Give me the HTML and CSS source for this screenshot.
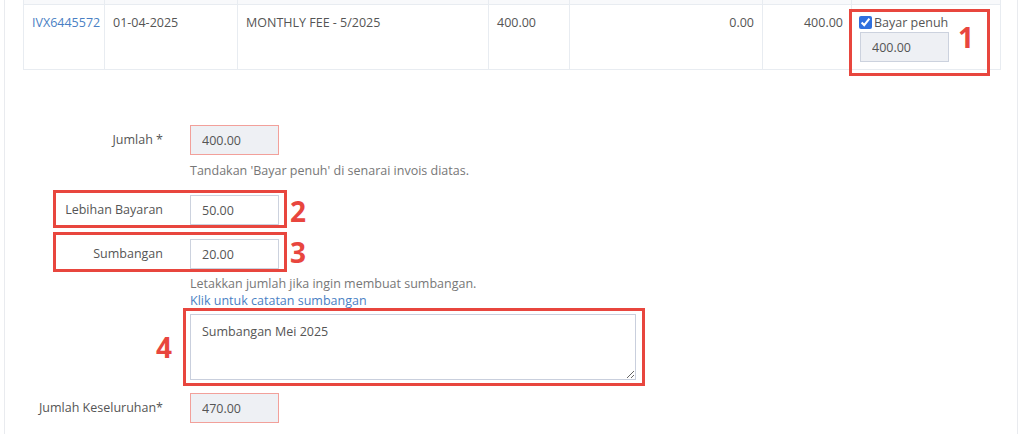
FILE: index.html
```html
<!DOCTYPE html>
<html lang="ms">
<head>
<meta charset="UTF-8">
<title>Bayaran Invois</title>
<link rel="stylesheet" href="styles.css">
</head>
<body>
<div class="panel">
  <table class="invoices">
    <colgroup>
      <col style="width:81px">
      <col style="width:133px">
      <col style="width:251px">
      <col style="width:81px">
      <col style="width:193px">
      <col style="width:89px">
      <col style="width:149px">
    </colgroup>
    <thead>
      <tr class="stub"><th></th><th></th><th></th><th></th><th></th><th></th><th></th></tr>
    </thead>
    <tbody>
      <tr>
        <td><a href="#" class="link">IVX6445572</a></td>
        <td>01-04-2025</td>
        <td>MONTHLY FEE - 5/2025</td>
        <td>400.00</td>
        <td class="num">0.00</td>
        <td class="num">400.00</td>
        <td class="pay-cell">
          <label class="full-pay"><input type="checkbox" checked> Bayar penuh</label>
          <input type="text" class="field field-small readonly" value="400.00" readonly>
        </td>
      </tr>
    </tbody>
  </table>

  <form class="pay-form">
    <div class="row">
      <label class="row-label">Jumlah *</label>
      <div class="row-field">
        <input type="text" class="field readonly error" value="400.00" readonly>
        <p class="help">Tandakan 'Bayar penuh' di senarai invois diatas.</p>
      </div>
    </div>
    <div class="row row-over">
      <label class="row-label">Lebihan Bayaran</label>
      <div class="row-field">
        <input type="text" class="field" value="50.00">
      </div>
    </div>
    <div class="row row-don">
      <label class="row-label">Sumbangan</label>
      <div class="row-field">
        <input type="text" class="field" value="20.00">
        <p class="help">Letakkan jumlah jika ingin membuat sumbangan.</p>
        <a href="#" class="link note-link">Klik untuk catatan sumbangan</a>
        <textarea class="note">Sumbangan Mei 2025</textarea>
      </div>
    </div>
    <div class="row row-total">
      <label class="row-label">Jumlah Keseluruhan*</label>
      <div class="row-field">
        <input type="text" class="field readonly error" value="470.00" readonly>
      </div>
    </div>
  </form>

  <!-- penanda arahan -->
  <div class="mark mark-1"></div>
  <span class="mark-num num-1">1</span>
  <div class="mark mark-2"></div>
  <span class="mark-num num-2">2</span>
  <div class="mark mark-3"></div>
  <span class="mark-num num-3">3</span>
  <div class="mark mark-4"></div>
  <span class="mark-num num-4">4</span>
</div>
</body>
</html>
```

FILE: styles.css
```css
body {
  margin: 0;
  background: #fff;
  font-family: 'Open Sans', 'Liberation Sans', sans-serif;
  font-size: 12.5px;
  color: #555;
}
.panel {
  position: relative;
  margin-left: 4px;
  width: 1014px;
  height: 434px;
  border-left: 1px solid #e9ebef;
  border-right: 1px solid #e9ebef;
  padding-left: 18px;
  box-sizing: border-box;
}
.invoices {
  table-layout: fixed;
  border-collapse: collapse;
  width: 977px;
}
.invoices th,
.invoices td {
  border: 1px solid #e8ecf1;
  padding: 9px 8px 8px;
  line-height: 17px;
  text-align: left;
  vertical-align: top;
  font-weight: normal;
}
.invoices .stub th {
  height: 4px;
  padding: 0;
  background: #f8f9fb;
  border-top: none;
}
.invoices tbody tr {
  height: 65px;
}
.invoices .num {
  text-align: right;
}
.invoices .pay-cell {
  padding-bottom: 6px;
}
.link {
  color: #4a7fc4;
  text-decoration: none;
}
.full-pay {
  display: flex;
  align-items: center;
  gap: 2px;
  font-size: 12.5px;
  color: #555;
}
.full-pay input {
  margin: 0 0 0 -1px;
  width: 13px;
  height: 13px;
  accent-color: #2f6fde;
}
.field {
  display: block;
  width: 89px;
  height: 30px;
  box-sizing: border-box;
  padding: 0 11px;
  border: 1px solid #ccd2de;
  background: #fff;
  font-family: inherit;
  font-size: 12.5px;
  color: #555;
  outline: none;
}
.field-small {
  margin-top: 1px;
}
.readonly {
  background: #eef0f4;
}
.error {
  border-color: #f2a09a;
}
.pay-form {
  margin-top: 55px;
}
.row {
  display: flex;
  gap: 27px;
}
.row-label {
  width: 140px;
  flex: none;
  text-align: right;
  line-height: 30px;
}
.row-field {
  display: flex;
  flex-direction: column;
  align-items: flex-start;
}
.help {
  margin: 7px 0 0;
  line-height: 17px;
  color: #777;
}
.row-over {
  margin-top: 16px;
}
.row-don {
  margin-top: 14px;
}
.row-don .help {
  margin-top: 6px;
}
.note-link {
  line-height: 17px;
}
.note {
  margin-top: 5px;
  width: 446px;
  height: 66px;
  box-sizing: border-box;
  padding: 8px 11px;
  border: 1px solid #c9cfdd;
  font-family: inherit;
  font-size: 12.5px;
  color: #555;
  resize: vertical;
  outline: none;
}
.row-total {
  margin-top: 13px;
}
.mark {
  position: absolute;
  border: 3px solid #e8463e;
  box-sizing: border-box;
}
.mark-1 { left: 844px; top: 9px; width: 141px; height: 67px; }
.mark-2 { left: 48px; top: 190px; width: 234px; height: 38px; }
.mark-3 { left: 48px; top: 232px; width: 234px; height: 40px; }
.mark-4 { left: 178px; top: 308px; width: 462px; height: 78px; }
.mark-num {
  position: absolute;
  font-size: 28px;
  font-weight: 700;
  line-height: 1;
  color: #e8463e;
}
.num-1 { left: 953px; top: 23px; }
.num-2 { left: 285px; top: 197px; }
.num-3 { left: 285px; top: 238px; }
.num-4 { left: 151px; top: 333px; }
```
